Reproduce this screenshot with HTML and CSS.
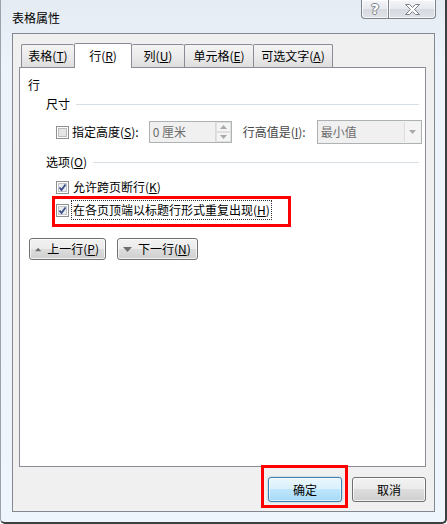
FILE: index.html
```html
<!DOCTYPE html>
<html lang="zh">
<head>
<meta charset="utf-8">
<title>表格属性</title>
<link rel="stylesheet" href="styles.css">
</head>
<body>
<div class="window">
  <div class="titlebar">
    <div class="title">表格属性</div>
    <div class="caption-buttons">
      <div class="cap-btn help"><span class="help-glyph">?</span></div>
      <div class="cap-btn close">
        <svg width="17" height="11" viewBox="0 0 17 11"><path d="M1.5 0.5 H5.5 L8.5 3.5 L11.5 0.5 H15.5 L10.5 5.5 L15.5 10.5 H11.5 L8.5 7.5 L5.5 10.5 H1.5 L6.5 5.5 Z" fill="#fff" stroke="#7c8189" stroke-width="1"/></svg>
      </div>
    </div>
  </div>
  <div class="client">
    <div class="tabs">
      <div class="tab t1">表格(<u>T</u>)</div>
      <div class="tab t2 active">行(<u>R</u>)</div>
      <div class="tab t3">列(<u>U</u>)</div>
      <div class="tab t4">单元格(<u>E</u>)</div>
      <div class="tab t5">可选文字(<u>A</u>)</div>
    </div>
    <div class="panel">
      <div class="section-title">行</div>
      <div class="group-head g1"><span>尺寸</span><div class="rule"></div></div>
      <div class="size-row">
        <span class="cb"><svg width="13" height="13" viewBox="0 0 13 13"><rect x="0.5" y="0.5" width="12" height="12" fill="#fff" stroke="#8e8f8f"/><rect x="2.5" y="2.5" width="8" height="8" fill="#e6e6e6" stroke="#bcbcbc"/></svg></span>
        <span class="lbl">指定高度(<u>S</u>):</span>
        <div class="num-input">
          <span class="val">0 厘米</span>
          <div class="spin">
            <div class="spin-btn"><svg width="7" height="4" viewBox="0 0 7 4"><path d="M0 4 L3.5 0 L7 4 Z" fill="#a9a9a9"/></svg></div>
            <div class="spin-btn"><svg width="7" height="4" viewBox="0 0 7 4"><path d="M0 0 L3.5 4 L7 0 Z" fill="#a9a9a9"/></svg></div>
          </div>
        </div>
        <span class="lbl dim">行高值是(<u>I</u>):</span>
        <div class="select">
          <span class="val">最小值</span>
          <div class="drop"><svg width="7" height="4" viewBox="0 0 7 4"><path d="M0 0 L3.5 4 L7 0 Z" fill="#a9a9a9"/></svg></div>
        </div>
      </div>
      <div class="group-head g2"><span>选项(<u>O</u>)</span><div class="rule"></div></div>
      <div class="check-row r1">
        <span class="cb"><svg width="13" height="13" viewBox="0 0 13 13"><rect x="0.5" y="0.5" width="12" height="12" fill="#fff" stroke="#8e8f8f"/><rect x="2.5" y="2.5" width="8" height="8" fill="#e9ebee" stroke="#c3c6cb"/><path d="M3.5 6.5 L5.5 9 L9.5 3.5" fill="none" stroke="#3b4e8a" stroke-width="1.8"/></svg></span>
        <span class="lbl">允许跨页断行(<u>K</u>)</span>
      </div>
      <div class="check-row r2">
        <span class="cb"><svg width="13" height="13" viewBox="0 0 13 13"><rect x="0.5" y="0.5" width="12" height="12" fill="#fff" stroke="#8e8f8f"/><rect x="2.5" y="2.5" width="8" height="8" fill="#e9ebee" stroke="#c3c6cb"/><path d="M3.5 6.5 L5.5 9 L9.5 3.5" fill="none" stroke="#3b4e8a" stroke-width="1.8"/></svg></span>
        <span class="lbl focus">在各页顶端以标题行形式重复出现(<u>H</u>)</span>
        <div class="mark mark-a"></div>
      </div>
      <div class="nav-row">
        <div class="btn nav prev"><svg width="9" height="5" viewBox="0 0 9 5"><path d="M0 5 L4.5 0 L9 5 Z" fill="#6f6f6f"/></svg><span>上一行(<u>P</u>)</span></div>
        <div class="btn nav next"><svg width="9" height="5" viewBox="0 0 9 5"><path d="M0 0 L4.5 5 L9 0 Z" fill="#6f6f6f"/></svg><span>下一行(<u>N</u>)</span></div>
      </div>
    </div>
    <div class="footer">
      <div class="btn-wrap">
        <div class="btn dlg ok">确定</div>
        <div class="mark mark-b"></div>
      </div>
      <div class="btn dlg">取消</div>
    </div>
  </div>
</div>
</body>
</html>
```
FILE: styles.css
```css
* { box-sizing: border-box; }
html, body { margin: 0; padding: 0; }
body {
  width: 447px;
  height: 524px;
  overflow: hidden;
  font-family: "Noto Sans CJK SC", "Liberation Sans", sans-serif;
  font-size: 12px;
  line-height: 16px;
  color: #000;
  background: #fff;
}
u { text-decoration: underline; text-underline-offset: 1px; }

.window {
  width: 447px;
  height: 524px;
  background: linear-gradient(180deg, #e4ebf2 0%, #edf3fa 12%, #eef5fd 100%);
  border-left: 1px solid #9aa3ad;
  border-right: 2px solid #3d3f42;
  border-bottom: 2px solid #3d3f42;
  border-radius: 0 0 5px 5px;
  display: flex;
  flex-direction: column;
}

.titlebar {
  height: 33px;
  display: flex;
  justify-content: space-between;
  align-items: flex-start;
  flex: none;
}
.title {
  padding: 10px 0 0 11px;
  font-size: 12px;
  line-height: 16px;
}
.caption-buttons {
  display: flex;
  margin-right: 9px;
}
.cap-btn {
  height: 19px;
  border: 1px solid #7d838c;
  border-top: none;
  background: linear-gradient(180deg, #f4f5f7 0%, #e6e9ed 50%, #d6dae0 51%, #dfe3e8 100%);
  display: flex;
  align-items: center;
  justify-content: center;
  box-shadow: inset 0 0 0 1px rgba(255,255,255,0.7);
}
.cap-btn.help {
  width: 28px;
  border-radius: 0 0 0 4px;
}
.cap-btn.close {
  width: 47px;
  border-left: none;
  border-radius: 0 0 4px 0;
}
.help-glyph {
  font-family: "DejaVu Sans", sans-serif;
  font-weight: bold;
  font-size: 14px;
  color: #fff;
  line-height: 14px;
  text-shadow: 1px 0 0 #7c8189, -1px 0 0 #7c8189, 0 1px 0 #7c8189, 0 -1px 0 #7c8189;
}

.client {
  margin: 0 10px 0 11px;
  height: 479px;
  border: 1px solid #828790;
  background: #f0f0f0;
  padding: 9px 8px 0 6px;
  display: flex;
  flex-direction: column;
}

.tabs {
  height: 25px;
  margin-bottom: -1px;
  padding-left: 2px;
  display: flex;
  align-items: flex-end;
  position: relative;
  z-index: 1;
  flex: none;
}
.tab {
  height: 23px;
  margin-bottom: 1px;
  border: 1px solid #898c95;
  border-bottom: none;
  border-right: none;
  border-radius: 2px 2px 0 0;
  background: linear-gradient(180deg, #f4f4f4 0%, #ebebeb 50%, #dedede 100%);
  text-align: center;
  line-height: 21px;
  white-space: nowrap;
}
.tab.t5 { border-right: 1px solid #898c95; }
.tab.t1 { width: 53px; }
.tab.t2 { width: 58px; }
.tab.t3 { width: 52px; }
.tab.t4 { width: 69px; }
.tab.t5 { width: 80px; }
.tab.active {
  height: 25px;
  margin-bottom: 0;
  background: #fff;
  border-right: 1px solid #898c95;
  line-height: 23px;
}
.tab.active + .tab { border-left: none; }

.panel {
  height: 400px;
  border: 1px solid #898c95;
  background: #fff;
  padding: 9px 0 0 8px;
  flex: none;
}
.section-title { height: 16px; }

.group-head {
  display: flex;
  align-items: center;
  padding-left: 18px;
  height: 16px;
}
.group-head.g1 { margin-top: 3px; }
.group-head.g2 { margin-top: 10px; }
.group-head .rule {
  flex: 1;
  height: 1px;
  background: #d5dfe5;
  margin: 0 6px 0 6px;
}

.size-row {
  display: flex;
  align-items: center;
  height: 24px;
  margin-top: 8px;
  padding-left: 28px;
}
.cb { width: 13px; height: 13px; display: block; flex: none; }
.cb svg { display: block; }
.lbl { white-space: nowrap; }
.size-row .lbl { margin-left: 3px; }
.lbl.dim { color: #444; margin-left: 11px; }

.num-input {
  margin-left: 10px;
  width: 83px;
  height: 22px;
  border: 1px solid #adb2b5;
  background: #f0f0f0;
  display: flex;
  align-items: center;
}
.num-input .val { flex: 1; padding-left: 3px; color: #6d6d6d; }
.spin {
  width: 16px;
  height: 20px;
  display: flex;
  flex-direction: column;
  border-left: 1px solid #d9d9d9;
}
.spin-btn {
  flex: 1;
  display: flex;
  align-items: center;
  justify-content: center;
  background: #f4f4f4;
  border: 1px solid #e0e0e0;
}
.select {
  margin-left: 11px;
  width: 105px;
  height: 24px;
  border: 1px solid #adb2b5;
  background: #f0f0f0;
  display: flex;
  align-items: stretch;
}
.select .val { flex: 1; padding-left: 3px; color: #6d6d6d; line-height: 22px; }
.drop {
  width: 16px;
  margin: 1px;
  background: #f4f4f4;
  border-left: 1px solid #dedede;
  display: flex;
  align-items: center;
  justify-content: center;
}

.check-row {
  display: flex;
  align-items: center;
  height: 20px;
  padding-left: 28px;
  position: relative;
}
.check-row .lbl { margin-left: 3px; padding: 1px 1px; }
.check-row.r1 { margin-top: 7px; }
.check-row.r2 { margin-top: 3px; }
.lbl.focus { outline: 1px dotted #333; outline-offset: 0; }

.mark {
  position: absolute;
  border: 3px solid #ff0000;
  pointer-events: none;
}
.mark-a {
  left: 24px;
  top: -4px;
  width: 239px;
  height: 31px;
}

.nav-row {
  display: flex;
  gap: 11px;
  margin-top: 18px;
  padding-left: 1px;
}
.btn {
  height: 22px;
  border: 1px solid #707070;
  border-radius: 3px;
  background: linear-gradient(180deg, #f2f2f2 0%, #ebebeb 49%, #dddddd 50%, #cfcfcf 100%);
  box-shadow: inset 0 0 0 1px rgba(255,255,255,0.75);
  display: flex;
  align-items: center;
  white-space: nowrap;
}
.btn.nav { padding: 0 6px 0 5px; gap: 6px; }
.btn.prev { width: 77px; }
.btn.next { width: 81px; }

.footer {
  display: flex;
  justify-content: flex-end;
  gap: 10px;
  margin-top: 10px;
  padding-right: 0;
}
.btn-wrap { position: relative; }
.btn.dlg {
  width: 74px;
  height: 25px;
  justify-content: center;
}
.btn.ok {
  border-color: #3c7fb1;
  background: linear-gradient(180deg, #eaf6fd 0%, #d9f0fc 49%, #bee6fd 50%, #a7d9f5 100%);
  box-shadow: inset 0 0 0 1px rgba(255,255,255,0.6), 0 0 2px rgba(60,127,177,0.5);
}
.mark-b {
  left: -7px;
  top: -12px;
  width: 87px;
  height: 43px;
}
```
